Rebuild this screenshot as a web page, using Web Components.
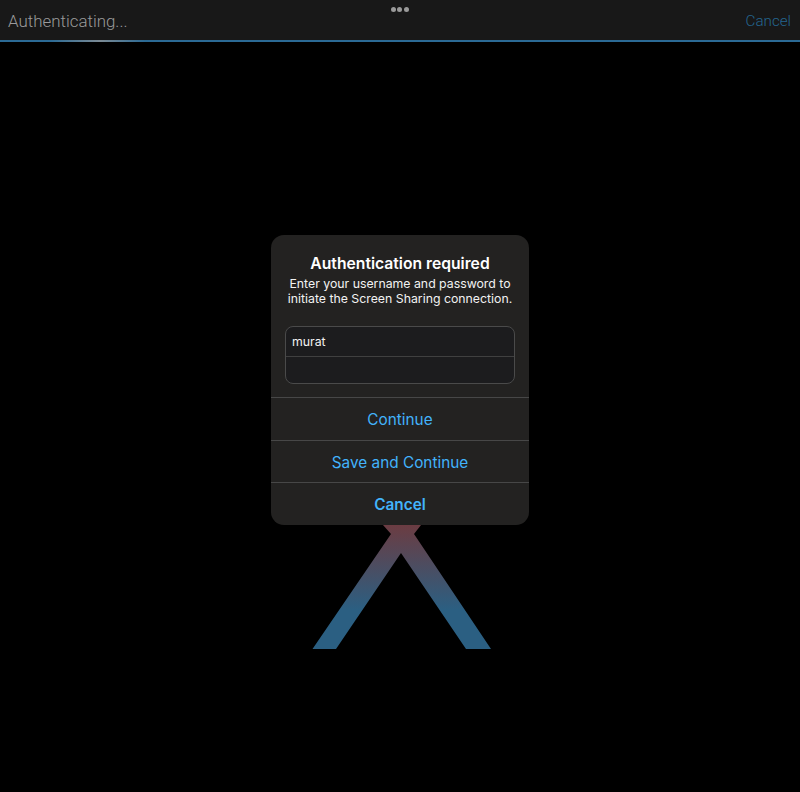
<!DOCTYPE html>
<html><head><meta charset="utf-8"><style>
html,body{margin:0;background:#000;height:100%}
body{font-family:Inter,"Liberation Sans",sans-serif;overflow:hidden}
</style></head><body>
<ss-app>
<ss-topbar slot="top"><span slot="title">Authenticating...</span><span slot="action">Cancel</span></ss-topbar>
<ss-dialog slot="main">
<span slot="title">Authentication required</span>
<span slot="message">Enter your username and password to<br>initiate the Screen Sharing connection.</span>
<ss-field slot="fields" value="murat"></ss-field>
<ss-field slot="fields" last></ss-field>
<ss-action slot="actions">Continue</ss-action>
<ss-action slot="actions">Save and Continue</ss-action>
<ss-action slot="actions" bold>Cancel</ss-action>
</ss-dialog>
<ss-logo slot="main"></ss-logo>
</ss-app>
<script>
function def(name,html,extra){
  customElements.define(name,class extends HTMLElement{
    constructor(){super();this.attachShadow({mode:'open'}).innerHTML=html;}
    connectedCallback(){if(extra)extra(this);}
  });
}
def('ss-app',`<style>
:host{display:flex;flex-direction:column;width:800px;height:792px;background:#000}
main{display:flex;flex-direction:column;align-items:center;padding-top:193px}
</style><slot name="top"></slot><main><slot name="main"></slot></main>`);
def('ss-topbar',`<style>
:host{display:block;position:relative;background:#181818;height:42px;box-sizing:border-box}
.row{display:flex;justify-content:space-between;align-items:center;height:40px;padding:1px 9px 0 8px;box-sizing:border-box;font:300 16.9px/20px Roboto,sans-serif}
.t{color:#9a9a9a}.a{color:#24658f;font-size:15.2px}
.dots{position:absolute;left:390.5px;top:7px;display:flex;gap:1.5px}
.dots i{width:5px;height:5px;border-radius:50%;background:#9a9a9a}
.line{height:2px;background:linear-gradient(90deg,#2b6a95 0,#2b6a95 50px,#7b8a94 100px,#2b6a95 145px,#2b6a95 100%)}
</style><div class="row"><span class="t"><slot name="title"></slot></span><span class="a"><slot name="action"></slot></span></div><div class="dots"><i></i><i></i><i></i></div><div class="line"></div>`);
def('ss-dialog',`<style>
:host{display:block;width:258px;height:290px;background:#232221;border-radius:13px;overflow:hidden;box-sizing:border-box;color:#fff}
.head{padding:19px 0 0;text-align:center;height:91px;box-sizing:border-box}
.title{font:600 15.7px/20px Inter,sans-serif;}
.msg{font:400 12.3px/15px Inter,sans-serif;margin-top:2px;color:#f2f2f2}
.fields{margin:0 14px;height:58px;box-sizing:border-box;border:1px solid #4a4a4a;border-radius:8px;background:#1c1c1e;overflow:hidden;display:flex;flex-direction:column}
.actions{margin-top:13px;display:flex;flex-direction:column}
</style><div class="head"><div class="title"><slot name="title"></slot></div><div class="msg"><slot name="message"></slot></div></div><div class="fields"><slot name="fields"></slot></div><div class="actions"><slot name="actions"></slot></div>`);
def('ss-field',`<style>
:host{display:flex;align-items:center;height:30px;box-sizing:border-box;padding-left:6px;font:400 12.3px/15px Inter,sans-serif;color:#f2f2f2;border-bottom:1px solid #404040}
:host([last]){border-bottom:0;height:26px}
</style><span id="v"></span>`,el=>{el.shadowRoot.getElementById('v').textContent=el.getAttribute('value')||'';});
def('ss-action',`<style>
:host{display:flex;align-items:center;justify-content:center;height:42.6px;box-sizing:border-box;border-top:1px solid #474747;font:400 15.35px/20px Inter,sans-serif;color:#42b3fb;padding-top:3px}
:host([bold]){font-weight:600}
</style><slot></slot>`);
def('ss-logo',`<style>:host{display:block;width:184px;height:124px}svg{display:block}</style>
<svg width="184" height="124" viewBox="308 525 184 124"><defs><linearGradient id="g" gradientUnits="userSpaceOnUse" x1="0" y1="525" x2="0" y2="610"><stop offset="0" stop-color="#6b3c42"/><stop offset="1" stop-color="#2b5f82"/></linearGradient></defs>
<polygon fill="url(#g)" points="383,525 421,525 414,534 491,649 466,649 401,553 336,649 312.5,649 391,534"/></svg>`);
</script>
</body></html>
